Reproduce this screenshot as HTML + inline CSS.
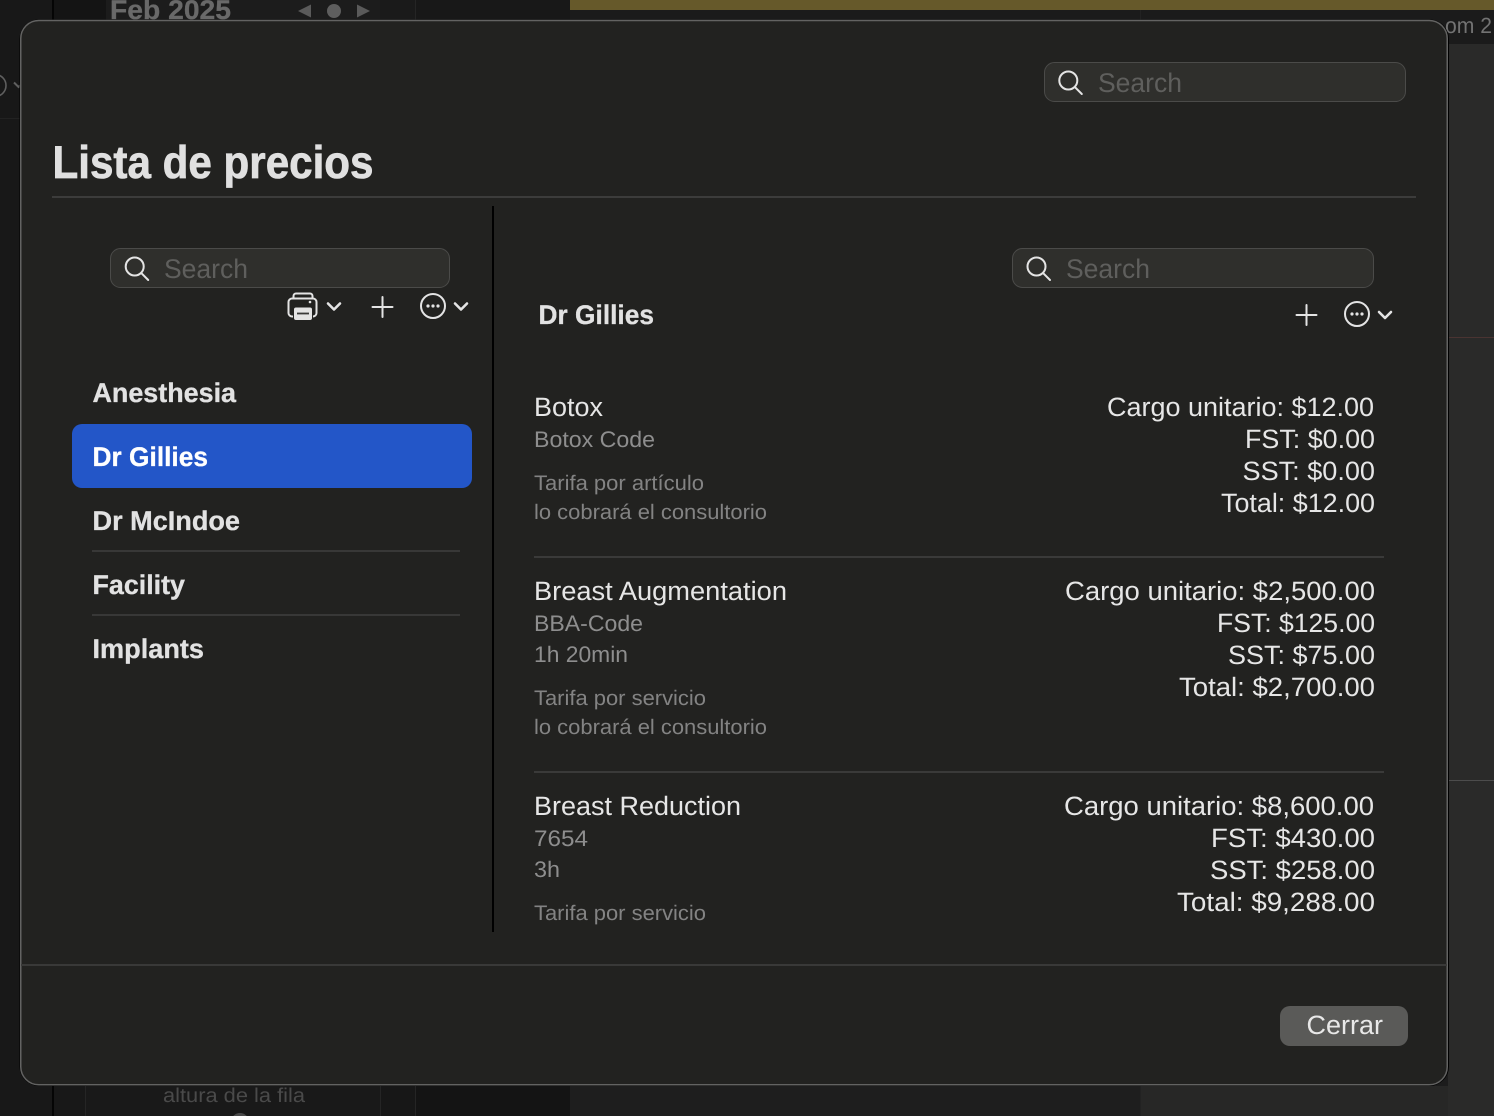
<!DOCTYPE html>
<html lang="es">
<head>
<meta charset="utf-8">
<title>Lista de precios</title>
<style>
html,body{margin:0;padding:0;width:1494px;height:1116px;overflow:hidden;background:#171717}
svg{display:block;position:absolute;left:0;top:0}
text{font-family:"Liberation Sans",sans-serif;text-rendering:geometricPrecision;white-space:pre}
.t{font-size:26.5px;fill:#e6e6e6}
.s{font-size:22.5px;fill:#8e8e8e}
.f{font-size:21px;fill:#838383}
.b{font-size:27px;font-weight:700;fill:#e2e2e2;stroke:#e2e2e2;stroke-width:.3px}
.p{font-size:27px;fill:#5f5f5d}
.ic{fill:none;stroke:#e4e4e4;stroke-width:2;stroke-linecap:round;stroke-linejoin:round}
</style>
</head>
<body>
<svg width="1494" height="1116" viewBox="0 0 1494 1116" xmlns="http://www.w3.org/2000/svg">
  <!-- background app -->
  <rect width="1494" height="1116" fill="#1c1c1c"/>
  <rect x="0" y="0" width="52" height="1116" fill="#181818"/>
  <rect x="54" y="0" width="52" height="21" fill="#141414"/>
  <rect x="106" y="0" width="274" height="21" fill="#1c1c1c"/>
  <rect x="380" y="0" width="35" height="21" fill="#1a1a1a"/>
  <rect x="415" y="0" width="155" height="21" fill="#181818"/>
  <rect x="54" y="1086" width="32" height="30" fill="#181818"/>
  <rect x="86" y="1086" width="294" height="30" fill="#191919"/>
  <rect x="380" y="1086" width="35" height="30" fill="#171717"/>
  <rect x="415" y="1086" width="155" height="30" fill="#141414"/>
  <rect x="570" y="1086" width="570" height="30" fill="#1e1e1e"/>
  <rect x="1140" y="1086" width="354" height="30" fill="#272726"/>
  <rect x="570" y="10" width="924" height="34" fill="#1b1b1b"/>
  <rect x="1448" y="44" width="46" height="1072" fill="#2a2a29"/>
  <rect x="52" y="0" width="2" height="21" fill="#050505"/>
  <rect x="52" y="1086" width="2" height="30" fill="#050505"/>
  <rect x="85" y="1086" width="1" height="30" fill="#252525"/>
  <rect x="380" y="1086" width="1" height="30" fill="#252525"/>
  <rect x="415" y="0" width="1" height="21" fill="#252525"/>
  <rect x="415" y="1086" width="1" height="30" fill="#252525"/>
  <rect x="1140" y="10" width="1" height="11" fill="#222"/>
  <rect x="1140" y="1086" width="1" height="30" fill="#222"/>
  <rect x="0" y="118" width="21" height="1" fill="#222"/>
  <rect x="570" y="0" width="924" height="10" fill="#66592a"/>
  <rect x="1449" y="337" width="45" height="1" fill="#4a3432"/>
  <rect x="1449" y="780" width="45" height="1" fill="#4c4c4c"/>
  <text x="110" y="19" font-size="27" font-weight="700" fill="#696969" stroke="#696969" stroke-width=".3" textLength="121" lengthAdjust="spacingAndGlyphs">Feb 2025</text>
  <path d="M298 11l13-6.500v13z" fill="#5a5a5a"/>
  <circle cx="334" cy="11" r="7" fill="#5e5e5e"/>
  <path d="M370 11l-13-6.500v13z" fill="#5a5a5a"/>
  <circle cx="-5" cy="85.500" r="11" fill="none" stroke="#5f5f5f" stroke-width="1.600"/>
  <path d="M14 82.500l4.500 4.500 4-4" fill="none" stroke="#5f5f5f" stroke-width="2"/>
  <text x="1445" y="33" font-size="22" fill="#737373" textLength="47" lengthAdjust="spacingAndGlyphs">om 2</text>
  <text x="163" y="1102" font-size="20" fill="#4a4a4a" textLength="142" lengthAdjust="spacingAndGlyphs">altura de la fila</text>
  <circle cx="240" cy="1122" r="9" fill="#4a4a4a"/>

  <!-- modal -->
  <rect x="19.500" y="19.500" width="1429.500" height="1066.500" rx="19.500" fill="#000"/>
  <rect x="20.750" y="20.500" width="1426.500" height="1064.300" rx="18" fill="#222220" stroke="#636362" stroke-width="1.500"/>

  <!-- top search -->
  <rect x="1044.500" y="62.500" width="361" height="39" rx="10" fill="#2f2f2c" stroke="#4b4b49"/>
  <g class="ic" transform="translate(1068.300 80.500)"><circle r="9"/><path d="M6.700 6.700l6.800 6.800"/></g>
  <text class="p" x="1098" y="92" textLength="84" lengthAdjust="spacingAndGlyphs">Search</text>

  <!-- title -->
  <text x="52.500" y="178" font-size="46" font-weight="700" fill="#e0e0e0" stroke="#e0e0e0" stroke-width=".7" textLength="321" lengthAdjust="spacingAndGlyphs">Lista de precios</text>
  <rect x="52" y="196" width="1364" height="2" fill="#3c3c3b"/>
  <rect x="492" y="206" width="2" height="726" fill="#000"/>

  <!-- left search -->
  <rect x="110.500" y="248.500" width="339" height="39" rx="10" fill="#2f2f2c" stroke="#4b4b49"/>
  <g class="ic" transform="translate(134.700 266.500)"><circle r="9"/><path d="M6.700 6.700l6.800 6.800"/></g>
  <text class="p" x="164" y="278" textLength="84" lengthAdjust="spacingAndGlyphs">Search</text>

  <!-- left toolbar -->
  <g class="ic">
    <path d="M293.500 298.500v-2.500a2.500 2.500 0 0 1 2.500-2.500h14a2.500 2.500 0 0 1 2.500 2.500v2.500"/>
    <path d="M293 316.500h-1a3.500 3.500 0 0 1-3.500-3.500v-11a3.500 3.500 0 0 1 3.500-3.500h21a3.500 3.500 0 0 1 3.500 3.500v11a3.500 3.500 0 0 1-3.500 3.500h-1"/>
    <path d="M328 303.500l6 6 6-6" stroke-width="2.600"/>
    <path d="M372.500 307h20M382.500 297v20"/>
    <circle cx="433" cy="306" r="12"/>
    <path d="M455 303.500l6 6 6-6" stroke-width="2.600"/>
  </g>
  <rect x="293.500" y="307" width="19" height="13.500" rx="2.500" fill="#e4e4e4" stroke="#222220" stroke-width="1"/>
  <path d="M297 313.500h12" stroke="#3a3a38" stroke-width="1.800"/>
  <circle cx="310" cy="302" r="1.300" fill="#e4e4e4"/>
  <g fill="#e4e4e4"><circle cx="428" cy="306" r="1.600"/><circle cx="433" cy="306" r="1.600"/><circle cx="438" cy="306" r="1.600"/></g>

  <!-- sidebar list -->
  <text class="b" x="92.500" y="402" textLength="143.500" lengthAdjust="spacingAndGlyphs">Anesthesia</text>
  <rect x="72" y="424" width="400" height="64" rx="10" fill="#2356c8"/>
  <text class="b" x="92.500" y="466" textLength="115.500" lengthAdjust="spacingAndGlyphs" style="fill:#fff;stroke:#fff">Dr Gillies</text>
  <text class="b" x="92.500" y="530" textLength="147.500" lengthAdjust="spacingAndGlyphs">Dr McIndoe</text>
  <rect x="92" y="550" width="368" height="2" fill="#383837"/>
  <text class="b" x="92.500" y="594" textLength="92.500" lengthAdjust="spacingAndGlyphs">Facility</text>
  <rect x="92" y="614" width="368" height="2" fill="#383837"/>
  <text class="b" x="92.500" y="658" textLength="111.500" lengthAdjust="spacingAndGlyphs">Implants</text>

  <!-- right search -->
  <rect x="1012.500" y="248.500" width="361" height="39" rx="10" fill="#2f2f2c" stroke="#4b4b49"/>
  <g class="ic" transform="translate(1036.500 266.500)"><circle r="9"/><path d="M6.700 6.700l6.800 6.800"/></g>
  <text class="p" x="1066" y="278" textLength="84" lengthAdjust="spacingAndGlyphs">Search</text>

  <!-- right header -->
  <text class="b" x="538.500" y="324" textLength="115.500" lengthAdjust="spacingAndGlyphs">Dr Gillies</text>
  <g class="ic">
    <path d="M1296.500 315h20M1306.500 305v20"/>
    <circle cx="1357" cy="314" r="12"/>
    <path d="M1379 312l6 6 6-6" stroke-width="2.600"/>
  </g>
  <g fill="#e4e4e4"><circle cx="1352" cy="314" r="1.600"/><circle cx="1357" cy="314" r="1.600"/><circle cx="1362" cy="314" r="1.600"/></g>

  <!-- Botox -->
  <text class="t" x="534" y="416" textLength="69" lengthAdjust="spacingAndGlyphs">Botox</text>
  <text class="s" x="534" y="447" textLength="121" lengthAdjust="spacingAndGlyphs">Botox Code</text>
  <text class="f" x="534" y="490" textLength="170" lengthAdjust="spacingAndGlyphs">Tarifa por artículo</text>
  <text class="f" x="534" y="519" textLength="233" lengthAdjust="spacingAndGlyphs">lo cobrará el consultorio</text>
  <text class="t" x="1107" y="416" textLength="267" lengthAdjust="spacingAndGlyphs">Cargo unitario: $12.00</text>
  <text class="t" x="1245" y="448" textLength="130" lengthAdjust="spacingAndGlyphs">FST: $0.00</text>
  <text class="t" x="1242.500" y="480" textLength="132.500" lengthAdjust="spacingAndGlyphs">SST: $0.00</text>
  <text class="t" x="1221" y="512" textLength="154" lengthAdjust="spacingAndGlyphs">Total: $12.00</text>
  <rect x="534" y="556" width="850" height="2" fill="#3a3a39"/>

  <!-- Breast Augmentation -->
  <text class="t" x="534" y="600" textLength="253" lengthAdjust="spacingAndGlyphs">Breast Augmentation</text>
  <text class="s" x="534" y="631" textLength="109" lengthAdjust="spacingAndGlyphs">BBA-Code</text>
  <text class="s" x="534" y="662" textLength="94" lengthAdjust="spacingAndGlyphs">1h 20min</text>
  <text class="f" x="534" y="705" textLength="172" lengthAdjust="spacingAndGlyphs">Tarifa por servicio</text>
  <text class="f" x="534" y="734" textLength="233" lengthAdjust="spacingAndGlyphs">lo cobrará el consultorio</text>
  <text class="t" x="1065" y="600" textLength="310" lengthAdjust="spacingAndGlyphs">Cargo unitario: $2,500.00</text>
  <text class="t" x="1217" y="632" textLength="158" lengthAdjust="spacingAndGlyphs">FST: $125.00</text>
  <text class="t" x="1228" y="664" textLength="147" lengthAdjust="spacingAndGlyphs">SST: $75.00</text>
  <text class="t" x="1179" y="696" textLength="196" lengthAdjust="spacingAndGlyphs">Total: $2,700.00</text>
  <rect x="534" y="771" width="850" height="2" fill="#3a3a39"/>

  <!-- Breast Reduction -->
  <text class="t" x="534" y="815" textLength="207" lengthAdjust="spacingAndGlyphs">Breast Reduction</text>
  <text class="s" x="534" y="846" textLength="54" lengthAdjust="spacingAndGlyphs">7654</text>
  <text class="s" x="534" y="877" textLength="26" lengthAdjust="spacingAndGlyphs">3h</text>
  <text class="f" x="534" y="920" textLength="172" lengthAdjust="spacingAndGlyphs">Tarifa por servicio</text>
  <text class="t" x="1064" y="815" textLength="310" lengthAdjust="spacingAndGlyphs">Cargo unitario: $8,600.00</text>
  <text class="t" x="1211" y="847" textLength="164" lengthAdjust="spacingAndGlyphs">FST: $430.00</text>
  <text class="t" x="1210" y="879" textLength="165" lengthAdjust="spacingAndGlyphs">SST: $258.00</text>
  <text class="t" x="1177" y="911" textLength="198" lengthAdjust="spacingAndGlyphs">Total: $9,288.00</text>

  <!-- footer -->
  <rect x="21" y="964" width="1426" height="2" fill="#393938"/>
  <rect x="1280" y="1006" width="128" height="40" rx="10" fill="#5a5a58"/>
  <text x="1306.500" y="1034" font-size="26.500" fill="#e8e8e8" textLength="76.500" lengthAdjust="spacingAndGlyphs">Cerrar</text>
</svg>
</body>
</html>
